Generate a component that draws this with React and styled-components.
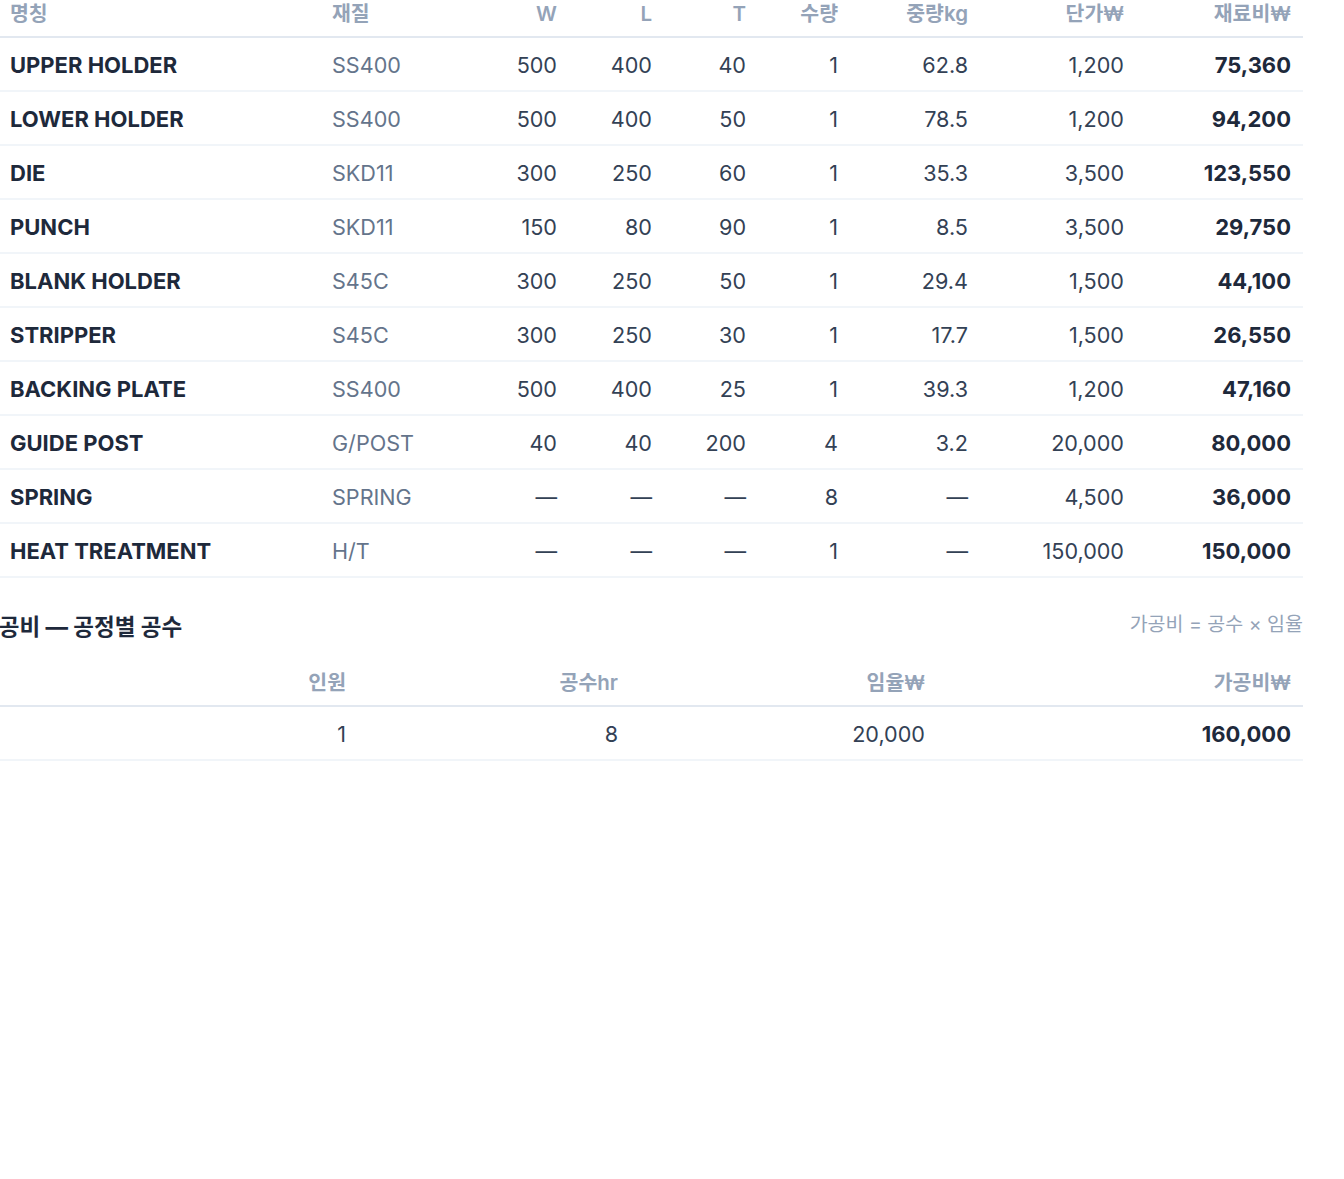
import React from "react";
import styled, {createGlobalStyle} from "styled-components";

const GlobalStyle = createGlobalStyle`
    html, body {
        margin: 0;
        padding: 0;
        background: #ffffff;
        overflow: hidden;
    }

    body {
        font-family: Inter, "Noto Sans CJK KR", "Noto Sans", sans-serif;
        color: #334155;
    }
`;

const Page = styled.div`
    width: 1305px;
    margin: -11px 0 0 -2px;
`;

const Table = styled.table`
    width: 100%;
    table-layout: fixed;
    border-collapse: collapse;
`;

const Th = styled.th`
    padding: 14px 12px 11px;
    line-height: 22px;
    font-size: 20.5px;
    font-weight: 600;
    color: #94a3b8;
    text-align: ${(p) => (p.$left ? "left" : "right")};
    border-bottom: 2px solid #e2e8f0;
    white-space: nowrap;
`;

const Td = styled.td`
    padding: 16px 12px 14px;
    line-height: 22px;
    font-size: ${(p) => (p.$strong ? "22px" : "21.6px")};
    font-weight: ${(p) => (p.$strong ? 700 : 400)};
    color: ${(p) => p.$color || "#334155"};
    text-align: ${(p) => (p.$left ? "left" : "right")};
    border-bottom: 2px solid #f1f5f9;
    white-space: nowrap;
`;

const SectionHead = styled.div`
    display: flex;
    align-items: center;
    justify-content: space-between;
    margin-top: 35px;
    height: 28px;
`;

const Title = styled.h3`
    margin: 0 0 0 -20px;
    font-size: 22.5px;
    font-weight: 700;
    color: #1e293b;
    line-height: 28px;
`;

const Note = styled.span`
    font-size: 19.5px;
    line-height: 22px;
    color: #94a3b8;
    margin-top: -7px;
`;

const LaborTable = styled(Table)`
    margin-top: 17px;
`;

const materialCols = [322, 155, 94, 95, 94, 92, 130, 156, 167];
const laborCols = [240, 120, 272, 307, 366];

const parts = [
    ["UPPER HOLDER", "SS400", "500", "400", "40", "1", "62.8", "1,200", "75,360"],
    ["LOWER HOLDER", "SS400", "500", "400", "50", "1", "78.5", "1,200", "94,200"],
    ["DIE", "SKD11", "300", "250", "60", "1", "35.3", "3,500", "123,550"],
    ["PUNCH", "SKD11", "150", "80", "90", "1", "8.5", "3,500", "29,750"],
    ["BLANK HOLDER", "S45C", "300", "250", "50", "1", "29.4", "1,500", "44,100"],
    ["STRIPPER", "S45C", "300", "250", "30", "1", "17.7", "1,500", "26,550"],
    ["BACKING PLATE", "SS400", "500", "400", "25", "1", "39.3", "1,200", "47,160"],
    ["GUIDE POST", "G/POST", "40", "40", "200", "4", "3.2", "20,000", "80,000"],
    ["SPRING", "SPRING", "—", "—", "—", "8", "—", "4,500", "36,000"],
    ["HEAT TREATMENT", "H/T", "—", "—", "—", "1", "—", "150,000", "150,000"],
];

function Cols({widths}) {
    return (
        <colgroup>
            {widths.map((w, i) => <col key={i} style={{width: w}}/>)}
        </colgroup>
    );
}

export default function App() {
    return (
        <>
            <GlobalStyle/>
            <Page>
                <Table>
                    <Cols widths={materialCols}/>
                    <thead>
                        <tr>
                            <Th $left>명칭</Th>
                            <Th $left>재질</Th>
                            <Th>W</Th>
                            <Th>L</Th>
                            <Th>T</Th>
                            <Th>수량</Th>
                            <Th>중량kg</Th>
                            <Th>단가₩</Th>
                            <Th>재료비₩</Th>
                        </tr>
                    </thead>
                    <tbody>
                        {parts.map((p) => (
                            <tr key={p[0]}>
                                <Td $left $strong $color="#1e293b">{p[0]}</Td>
                                <Td $left $color="#64748b">{p[1]}</Td>
                                <Td>{p[2]}</Td>
                                <Td>{p[3]}</Td>
                                <Td>{p[4]}</Td>
                                <Td>{p[5]}</Td>
                                <Td>{p[6]}</Td>
                                <Td>{p[7]}</Td>
                                <Td $strong $color="#1e293b">{p[8]}</Td>
                            </tr>
                        ))}
                    </tbody>
                </Table>

                <SectionHead>
                    <Title>가공비 — 공정별 공수</Title>
                    <Note>가공비 = 공수 × 임율</Note>
                </SectionHead>

                <LaborTable>
                    <Cols widths={laborCols}/>
                    <thead>
                        <tr>
                            <Th $left></Th>
                            <Th>인원</Th>
                            <Th>공수hr</Th>
                            <Th>임율₩</Th>
                            <Th>가공비₩</Th>
                        </tr>
                    </thead>
                    <tbody>
                        <tr>
                            <Td $left></Td>
                            <Td>1</Td>
                            <Td>8</Td>
                            <Td>20,000</Td>
                            <Td $strong $color="#1e293b">160,000</Td>
                        </tr>
                    </tbody>
                </LaborTable>
            </Page>
        </>
    );
}
